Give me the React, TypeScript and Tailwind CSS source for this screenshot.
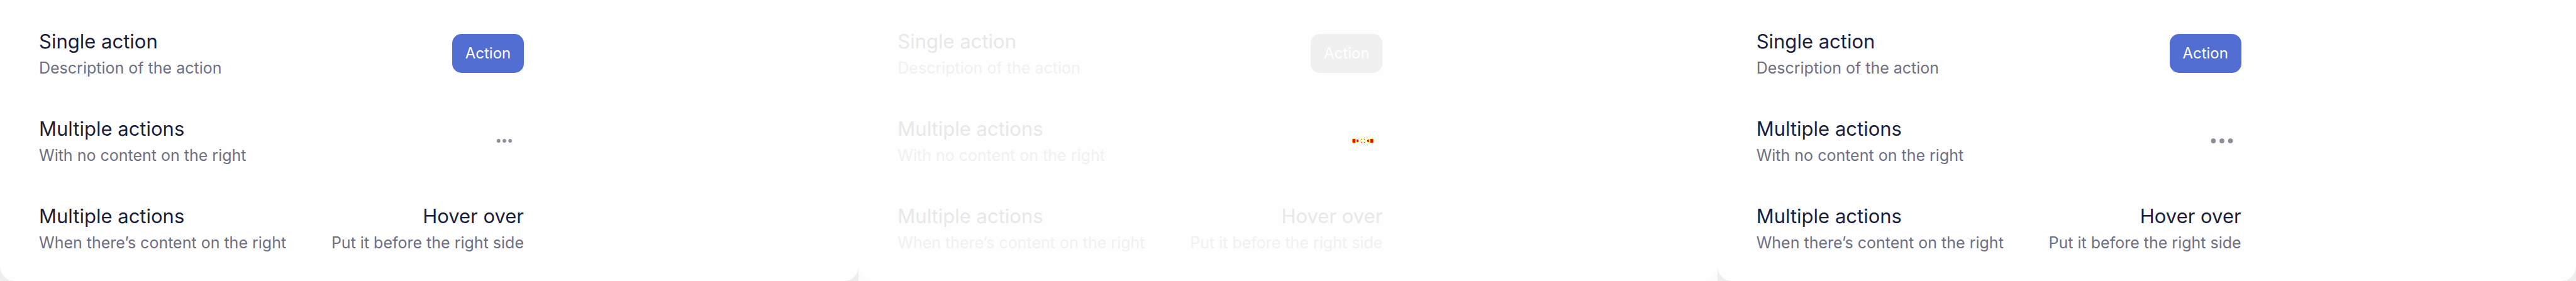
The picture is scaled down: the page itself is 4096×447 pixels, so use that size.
import React from "react";

type Variant = "before" | "diff" | "after";

const palette: Record<Variant, { title: string; text: string; button: string; corner: string }> = {
  before: { title: "text-[#1b1f3b]", text: "text-[#6f6f84]", button: "bg-[#526ed3] text-white", corner: "bg-[#eeeeee]" },
  diff: { title: "text-[#e8e8e8]", text: "text-[#f1f1f1]", button: "bg-[#f0f0f0] text-white", corner: "bg-[#fbfbfb]" },
  after: { title: "text-[#1b1f3b]", text: "text-[#6f6f84]", button: "bg-[#526ed3] text-white", corner: "bg-[#eeeeee]" },
};

function Dots({ variant }: { variant: Variant }) {
  if (variant === "diff") {
    return (
      <svg viewBox="0 0 64 64" className="size-full" aria-hidden="true">
        <g fill="#ffff00">
          <circle cx="18" cy="32" r="4.2" />
          <circle cx="22.5" cy="32" r="3" />
          <circle cx="46" cy="32" r="4.2" />
          <circle cx="41.5" cy="32" r="3" />
        </g>
        <g fill="#ff0000">
          <rect x="15" y="29" width="5" height="6" />
          <path d="M22 30h2v1h1v2h-1v1h-2z" />
          <rect x="44" y="29" width="5" height="6" />
          <path d="M42 30h-2v1h-1v2h1v1h2z" />
        </g>
        <path d="M20 29.5h1.6v5H20zM42.4 29.5H44v5h-1.6z" fill="#f4f4f4" />
        <circle cx="32" cy="32" r="3.5" fill="#f8f8f8" stroke="#ffff00" strokeWidth="1" />
        <path d="M29 29h1v1h-1zM34 29h1v1h-1zM29 34h1v1h-1zM34 34h1v1h-1z" fill="#ff0000" />
      </svg>
    );
  }
  const gap = variant === "before" ? 9.5 : 14;
  const r = variant === "before" ? 3 : 4;
  return (
    <svg viewBox="0 0 64 64" className="size-full" fill="#8d8d9c" aria-hidden="true">
      <circle cx={32 - gap} cy="32" r={r} />
      <circle cx="32" cy="32" r={r} />
      <circle cx={32 + gap} cy="32" r={r} />
    </svg>
  );
}

function Lines({ title, text, variant }: { title: string; text: string; variant: Variant }) {
  const c = palette[variant];
  return (
    <div className="whitespace-nowrap">
      <p className={`text-[31px] leading-[46px] ${c.title}`}>{title}</p>
      <p className={`text-[25px] leading-[38px] ${c.text}`}>{text}</p>
    </div>
  );
}

function Row({
  variant,
  title,
  text,
  children,
}: {
  variant: Variant;
  title: string;
  text: string;
  children: React.ReactNode;
}) {
  return (
    <li className="flex items-center justify-between">
      <Lines title={title} text={text} variant={variant} />
      {children}
    </li>
  );
}

function Panel({ variant }: { variant: Variant }) {
  const c = palette[variant];
  return (
    <section className={c.corner}>
      <div className="h-full rounded-b-[23px] bg-[#fefefe] px-[62px] pt-[43px] pb-[42px]">
        <ul className="flex max-w-[771px] flex-col gap-[55px]">
          <Row variant={variant} title="Single action" text="Description of the action">
            <button type="button" className={`h-[62px] w-[114px] rounded-[15px] text-[24px] ${c.button}`}>
              Action
            </button>
          </Row>
          <Row variant={variant} title="Multiple actions" text="With no content on the right">
            <button type="button" aria-label="More actions" className="size-[62px]">
              <Dots variant={variant} />
            </button>
          </Row>
          <Row variant={variant} title="Multiple actions" text="When there’s content on the right">
            <div className="text-right">
              <Lines title="Hover over" text="Put it before the right side" variant={variant} />
            </div>
          </Row>
        </ul>
      </div>
    </section>
  );
}

export default function App() {
  return (
    <main className="grid min-h-screen grid-cols-3 font-['Inter',sans-serif]">
      <Panel variant="before" />
      <Panel variant="diff" />
      <Panel variant="after" />
    </main>
  );
}
